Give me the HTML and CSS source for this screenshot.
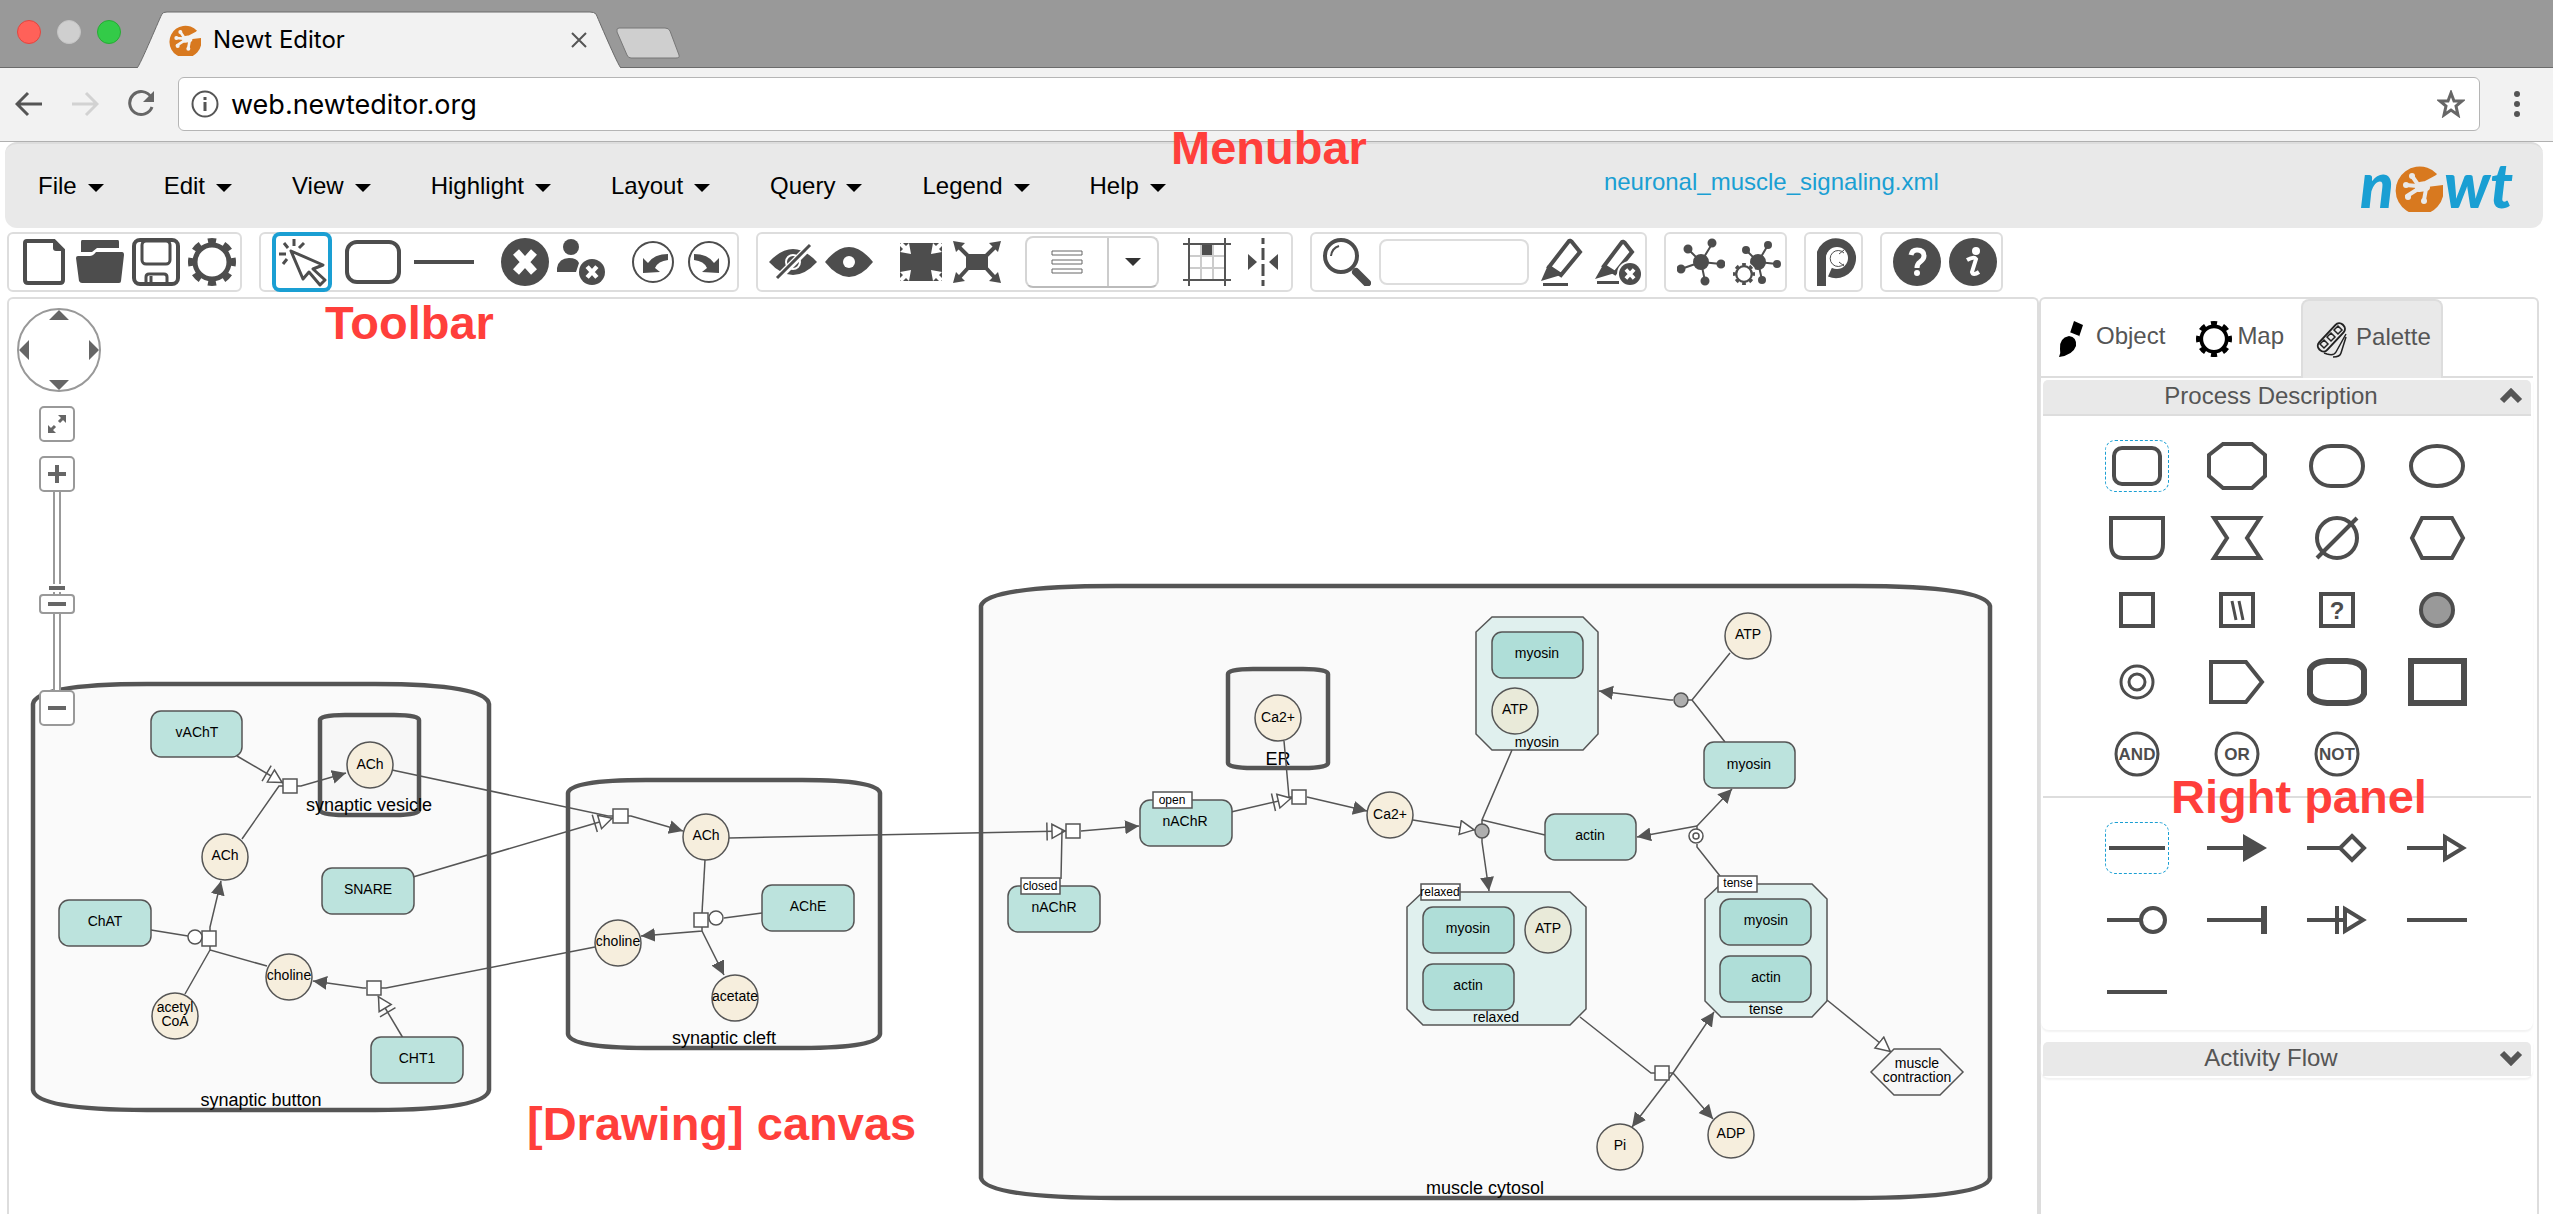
FILE: index.html
```html
<!DOCTYPE html>
<html lang="en">
<head>
<meta charset="utf-8">
<title>Newt Editor</title>
<link rel="stylesheet" href="styles.css">
</head>
<body>
<svg class="defs" aria-hidden="true">
  <symbol id="gear" viewBox="0 0 48 48"><g fill="none" stroke="currentColor"><circle cx="24" cy="24" r="17" stroke-width="5"/><circle cx="24" cy="24" r="21" stroke-width="6" pathLength="16" stroke-dasharray="1 1" stroke-dashoffset=".5"/></g></symbol>
  <symbol id="paw" viewBox="0 0 48 48"><path fill="#d8791f" d="M42 10A24 24 0 1 0 48 21L32 23z"/><g fill="none" stroke="var(--paw)" stroke-linecap="round"><path stroke-width="4" d="M24 22L17 12M22 22L11 21M23 25L12 32M31 25L29 36"/><path stroke-width="6" d="M25 21L31 20L46 12"/><path stroke-width="8" d="M24 24L31 23"/></g><g fill="var(--paw)"><circle cx="17" cy="12" r="3"/><circle cx="11" cy="21" r="3"/><circle cx="13" cy="33" r="3"/><circle cx="29" cy="37" r="3"/></g></symbol>
  <symbol id="cross" viewBox="0 0 48 48"><circle cx="24" cy="24" r="24" fill="currentColor"/><path d="M15 14L33 34M33 14L15 34" stroke="#fff" stroke-width="8"/></symbol>
</svg>

<header class="browser">
  <div class="titlebar">
    <i class="light red"></i><i class="light gray"></i><i class="light green"></i>
    <div class="tab">
      <svg class="tab-shape" viewBox="0 0 484 56"><path d="M0 56C3 54 24 3 25 2Q26 0 30 0H453Q457 0 459 2C460 4 481 54 484 56" fill="#f2f2f2" stroke="#6b6b6b"/></svg>
      <svg class="favicon" viewBox="0 0 48 48"><use href="#paw"/></svg>
      <span>Newt Editor</span>
      <button class="close" aria-label="Close tab"><svg viewBox="0 0 16 16"><path d="M1 1L15 15M15 1L1 15" stroke="#555" stroke-width="2"/></svg></button>
    </div>
    <svg class="newtab" viewBox="0 0 66 32"><path d="M4 1H50Q54 1 55 4L64 28Q65 31 61 31H16Q13 31 12 28L2 5Q1 1 4 1z" fill="#cfcfcf" stroke="#777"/></svg>
  </div>
  <div class="addressbar">
    <button aria-label="Back"><svg viewBox="0 0 28 28"><path d="M27 14H2M13 3L2 14L13 25" fill="none" stroke="#555" stroke-width="3"/></svg></button>
    <button aria-label="Forward"><svg viewBox="0 0 28 28"><path d="M1 14H26M15 3L26 14L15 25" fill="none" stroke="#d2d2d2" stroke-width="3"/></svg></button>
    <button aria-label="Reload"><svg viewBox="0 0 28 28"><path d="M24 7A11.500 11.500 0 1 0 25 17" fill="none" stroke="#666" stroke-width="3"/><path d="M27 1V12H16z" fill="#666"/></svg></button>
    <div class="urlbox">
      <svg class="info" viewBox="0 0 28 28"><circle cx="14" cy="14" r="12.500" fill="none" stroke="#555" stroke-width="2"/><path d="M14 12V21M14 7V10" stroke="#555" stroke-width="3"/></svg>
      <input type="text" value="web.newteditor.org" aria-label="Address">
      <svg class="star" viewBox="0 0 28 28"><path d="M14 3L17 11H25L19 16L21 25L14 20L7 25L9 16L3 11H11z" fill="none" stroke="#666" stroke-width="3"/></svg>
    </div>
    <button class="dots" aria-label="Browser menu"><svg viewBox="0 0 8 28"><g fill="#555"><circle cx="4" cy="4" r="3"/><circle cx="4" cy="14" r="3"/><circle cx="4" cy="24" r="3"/></g></svg></button>
  </div>
</header>

<nav class="menubar">
  <button>File</button><button>Edit</button><button>View</button><button>Highlight</button><button>Layout</button><button>Query</button><button>Legend</button><button>Help</button>
  <a class="filename" href="#">neuronal_muscle_signaling.xml</a>
  <div class="logo" role="img" aria-label="newt">
    <span>n</span><svg viewBox="0 0 48 48"><use href="#paw"/></svg><span>wt</span>
  </div>
  <strong class="note note-menubar">Menubar</strong>
</nav>

<div class="toolbar">
  <div class="group">
    <button aria-label="New"><svg viewBox="0 0 48 48"><path d="M7 3H34L43 12V42Q43 45 40 45H8Q5 45 5 42V5Q5 3 7 3z" fill="none" stroke="currentColor" stroke-width="4"/><path d="M33 2V10Q33 13 36 13H44z" fill="currentColor"/></svg></button>
    <button aria-label="Open"><svg viewBox="0 0 48 48"><path fill="currentColor" d="M6 2H42Q43 2 43 4V10H21L16 14H5V4Q5 2 6 2zM2 18H14Q17 18 20 14H46Q48 14 48 17L45 43Q45 45 43 45H6Q4 45 3 43L0 20Q0 18 2 18z"/></svg></button>
    <button aria-label="Save"><svg viewBox="0 0 48 48"><g fill="none" stroke="currentColor" stroke-width="4"><rect x="2" y="2" width="44" height="44" rx="6"/><rect x="10" y="3" width="28" height="23" rx="4" stroke-width="3"/><path d="M14 46V39Q14 36 17 36H32Q35 36 35 39V46" stroke-width="3"/><path d="M19 38V44" stroke-width="3"/></g></svg></button>
    <button aria-label="Settings"><svg viewBox="0 0 48 48"><use href="#gear"/></svg></button>
  </div>
  <div class="group">
    <button class="wide active" aria-label="Select"><svg viewBox="0 0 60 60"><g fill="none" stroke="currentColor" stroke-width="3"><path d="M19 19L51 33L41 37L53 48L48 53L37 40L31 47z" stroke-linejoin="round"/><path d="M22 7V14M32 11L27 16M12 11L16 16M7 22H14M15 27L11 32"/></g></svg></button>
    <button class="wide" aria-label="Add node"><svg viewBox="0 0 60 60"><rect x="4" y="10" width="52" height="40" rx="10" fill="none" stroke="currentColor" stroke-width="4"/></svg></button>
    <button class="wide" aria-label="Add edge"><svg viewBox="0 0 60 60"><path d="M0 30H60" stroke="currentColor" stroke-width="4"/></svg></button>
    <button class="sep" aria-label="Delete"><svg viewBox="0 0 48 48"><use href="#cross"/></svg></button>
    <button aria-label="Delete complex"><svg viewBox="0 0 48 48"><circle cx="14" cy="9" r="8" fill="currentColor"/><path d="M0 34V30Q2 20 12 20Q20 20 22 25L19 34z" fill="currentColor"/><use href="#cross" x="22" y="21" width="26" height="26"/></svg></button>
    <button class="sep" aria-label="Undo"><svg viewBox="0 0 48 48"><circle cx="24" cy="24" r="20" fill="none" stroke="currentColor" stroke-width="2"/><path d="M14 20V35L31 34L26 30Q29 23 39 22V16Q25 16 19 25z" fill="currentColor"/></svg></button>
    <button aria-label="Redo"><svg viewBox="0 0 48 48"><circle cx="24" cy="24" r="20" fill="none" stroke="currentColor" stroke-width="2"/><path d="M34 20V35L17 34L22 30Q19 23 9 22V16Q23 16 29 25z" fill="currentColor"/></svg></button>
  </div>
  <div class="group">
    <button aria-label="Hide selected"><svg viewBox="0 0 48 48"><path d="M0 24Q12 11 24 11T48 24Q36 37 24 37T0 24z" fill="currentColor"/><circle cx="24" cy="24" r="7" fill="none" stroke="#fff" stroke-width="2"/><path d="M42 7L8 41" stroke="#fff" stroke-width="7"/><path d="M41 7L8 40" stroke="currentColor" stroke-width="3"/></svg></button>
    <button aria-label="Show all"><svg viewBox="0 0 48 48"><path d="M0 24Q12 9 24 9T48 24Q36 39 24 39T0 24z" fill="currentColor"/><circle cx="24" cy="24" r="6" fill="#fff"/></svg></button>
    <button class="sep" aria-label="Collapse"><svg viewBox="0 0 48 48"><rect x="3" y="5" width="42" height="38" fill="currentColor"/><g fill="#fff"><path d="M2 7L5 4L9 8L12 5L14 16L3 14L6 11z"/><path d="M46 7L43 4L39 8L36 5L34 16L45 14L42 11zM2 41L5 44L9 40L12 43L14 32L3 34L6 37zM46 41L43 44L39 40L36 43L34 32L45 34L42 37z"/></g></svg></button>
    <button aria-label="Expand"><svg viewBox="0 0 48 48"><rect x="13" y="16" width="22" height="16" fill="currentColor"/><path d="M5 8L15 18M43 8L33 18M5 41L15 30M43 41L33 30" stroke="currentColor" stroke-width="4"/><path d="M0 3L12 5L3 14zM48 3L36 5L45 14zM0 45L12 43L3 34zM48 45L36 43L45 34z" fill="currentColor"/></svg></button>
    <div class="split sep">
      <button aria-label="Align"><svg viewBox="0 0 32 24"><path d="M1 1H31V5H1zM1 10H31V14H1zM1 19H31V23H1z" fill="none" stroke="#666"/></svg></button>
      <button class="drop" aria-label="Alignment options"></button>
    </div>
    <button class="sep" aria-label="Grid"><svg viewBox="0 0 48 48"><path d="M18 6V42M30 6V42M6 18H42M6 30H42" stroke="#ccc" stroke-width="2"/><path d="M6 0V48M42 0V48M0 6H48M0 42H48" stroke="#555" stroke-width="2"/><rect x="19" y="7" width="10" height="10" fill="currentColor"/></svg></button>
    <button aria-label="Guidelines"><svg viewBox="0 0 48 48"><path d="M24 0V48" stroke="currentColor" stroke-width="3" stroke-dasharray="6 4 12 4 12 4"/><path d="M9 16L18 24L9 32zM39 16L30 24L39 32z" fill="currentColor"/></svg></button>
  </div>
  <div class="group">
    <button aria-label="Search"><svg viewBox="0 0 48 48"><g fill="none" stroke="currentColor"><circle cx="18" cy="18" r="16" stroke-width="4"/><path d="M8 18Q9 10 16 8" stroke-width="2"/><path d="M33 34L44 45" stroke-width="8" stroke-linecap="round"/></g></svg></button>
    <input class="search" type="text" aria-label="Search by label">
    <button aria-label="Highlight"><svg viewBox="0 0 48 48"><path d="M32 3Q33 2 35 4L43 14L24 37L12 29z" fill="none" stroke="currentColor" stroke-width="4"/><path d="M11 27L24 37L4 43zM6 45H31V48H6z" fill="currentColor"/></svg></button>
    <button aria-label="Remove highlights"><svg viewBox="0 0 48 48"><path d="M29 4Q30 3 32 5L39 14L22 35L11 28z" fill="none" stroke="currentColor" stroke-width="4"/><path d="M10 27L22 35L2 41zM4 43H26V46H4z" fill="currentColor"/><circle cx="37" cy="36" r="13" fill="#fff"/><use href="#cross" x="26" y="25" width="22" height="22"/></svg></button>
  </div>
  <div class="group">
    <button aria-label="Layout"><svg viewBox="0 0 48 48"><g stroke="currentColor" stroke-width="2" fill="currentColor"><path d="M24 24L35 6M24 24L11 11M24 24L4 31M24 24L44 26M24 24L28 43"/><circle cx="24" cy="24" r="7"/><circle cx="35" cy="5" r="3.500"/><circle cx="11" cy="11" r="3.500"/><circle cx="4" cy="31" r="3.500"/><circle cx="44" cy="26" r="3.500"/><circle cx="28" cy="43" r="3.500"/></g></svg></button>
    <button aria-label="Layout settings"><svg viewBox="0 0 48 48"><g stroke="currentColor" stroke-width="2" fill="currentColor"><path d="M25 24L35 7M25 24L13 12M25 24L44 26M25 24L29 42"/><circle cx="25" cy="24" r="7"/><circle cx="35" cy="7" r="3"/><circle cx="13" cy="12" r="3"/><circle cx="44" cy="26" r="3"/><circle cx="29" cy="42" r="3"/></g><circle cx="11" cy="36" r="12" fill="#fff"/><use href="#gear" x="0" y="25" width="22" height="22"/></svg></button>
  </div>
  <div class="group">
    <button class="narrow" aria-label="Query Pathway Commons"><svg viewBox="0 0 40 48"><path d="M4 48V20A15 15 0 1 1 13 34" fill="none" stroke="currentColor" stroke-width="10"/><circle cx="20" cy="20" r="11" fill="#fff"/><path d="M27 15A8 8 0 1 0 27 26M22 16L27 12M22 24L27 28" fill="none" stroke="currentColor"/></svg></button>
  </div>
  <div class="group">
    <button aria-label="Quick help"><svg viewBox="0 0 48 48"><circle cx="24" cy="24" r="24" fill="currentColor"/><path d="M18 17Q19 12 24 12Q31 12 31 18Q31 21 27 24Q24 26 24 30" fill="none" stroke="#fff" stroke-width="5"/><circle cx="24" cy="35" r="3" fill="#fff"/></svg></button>
    <button aria-label="About"><svg viewBox="0 0 48 48"><circle cx="24" cy="24" r="24" fill="currentColor"/><circle cx="27" cy="13" r="4" fill="#fff"/><path d="M18 22Q25 18 27 21L23 34Q24 38 30 34" fill="none" stroke="#fff" stroke-width="4"/></svg></button>
  </div>
</div>

<main class="workspace">
  <section class="canvas" aria-label="Drawing canvas">
    <svg class="graph" viewBox="9 299 2028 915">
      <defs>
        <marker id="arrow" markerUnits="userSpaceOnUse" markerWidth="16" markerHeight="16" refX="14" refY="7" orient="auto"><path d="M0 0L14 7L0 14z" fill="#555"/></marker>
        <marker id="open" markerUnits="userSpaceOnUse" markerWidth="18" markerHeight="18" refX="16" refY="8" orient="auto"><path d="M1 1L15 8L1 15z" fill="#fff" stroke="#555" stroke-width="1.500"/></marker>
        <marker id="trigger" markerUnits="userSpaceOnUse" markerWidth="24" markerHeight="20" refX="21" refY="10" orient="auto"><path d="M7 3L20 10L7 17zM2 1V19" fill="#fff" stroke="#555" stroke-width="1.500"/></marker>
        <path id="cut" d="M1492 617H1583L1598 632V734L1583 750H1492L1476 734V632z"/>
      </defs>
      <g class="compartment">
        <path d="M33 704Q36 684 147 684H375Q486 684 489 704V1090Q486 1110 375 1110H147Q36 1110 33 1090z"/>
        <path d="M568 793Q570 780 646 780H802Q878 780 880 793V1034Q878 1048 802 1048H646Q570 1048 568 1034z"/>
        <path d="M981 606Q986 586 1116 586H1855Q1985 586 1990 606V1178Q1985 1198 1855 1198H1116Q986 1198 981 1178z"/>
        <path class="inner" d="M320 720Q320 715 345 715H394Q419 715 419 720V810Q419 815 394 815H345Q320 815 320 810z"/>
        <path class="inner" d="M1228 674Q1228 669 1253 669H1303Q1328 669 1328 674V763Q1328 768 1303 768H1253Q1228 768 1228 763z"/>
      </g>
      <g class="title">
        <text x="261" y="1106">synaptic button</text><text x="369" y="811">synaptic vesicle</text><text x="724" y="1044">synaptic cleft</text><text x="1278" y="765">ER</text><text x="1485" y="1194">muscle cytosol</text>
      </g>
      <g class="complex">
        <use href="#cut"/><use href="#cut" x="229" y="267"/>
        <path d="M1423 892H1570L1586 907V1009L1570 1025H1423L1407 1009V907z"/>
      </g>
      <g class="edge">
        <path d="M237 756L283 783" marker-end="url(#trigger)"/>
        <path d="M242 839L279 786H283"/>
        <path d="M297 786H301L346 773" marker-end="url(#arrow)"/>
        <path d="M392 770L608 816H613"/>
        <path d="M413 877L613 818" marker-end="url(#trigger)"/>
        <path d="M628 816H631L683 831" marker-end="url(#arrow)"/>
        <path d="M729 838L1066 831" marker-end="url(#trigger)"/>
        <path d="M705 860L702 913"/>
        <path d="M762 913L724 918"/>
        <path d="M702 927V931L641 936" marker-end="url(#arrow)"/>
        <path d="M702 931L724 975" marker-end="url(#arrow)"/>
        <path d="M595 947L386 988H381"/>
        <path d="M366 988H363L313 981" marker-end="url(#arrow)"/>
        <path d="M403 1038L378 996" marker-end="url(#trigger)"/>
        <path d="M151 930L188 936"/>
        <path d="M210 931V927L221 881" marker-end="url(#arrow)"/>
        <path d="M210 946V950L267 966M210 950L185 994"/>
        <path d="M1061 879L1062 831H1066"/>
        <path d="M1081 831L1139 826" marker-end="url(#arrow)"/>
        <path d="M1231 812L1292 798" marker-end="url(#trigger)"/>
        <path d="M1284 741L1289 797H1292"/>
        <path d="M1307 797L1367 811" marker-end="url(#arrow)"/>
        <path d="M1413 820L1475 830" marker-end="url(#open)"/>
        <path d="M1512 750L1482 820V824M1545 835L1482 820"/>
        <path d="M1482 838V842L1489 891" marker-end="url(#arrow)"/>
        <path d="M1730 653L1692 700L1725 742M1692 700H1688"/>
        <path d="M1673 700H1670L1599 691" marker-end="url(#arrow)"/>
        <path d="M1697 829V826L1732 789" marker-end="url(#arrow)"/>
        <path d="M1697 826L1637 837" marker-end="url(#arrow)"/>
        <path d="M1697 844V847L1720 876"/>
        <path d="M1580 1017L1651 1073H1655M1669 1073H1673"/>
        <path d="M1673 1073L1714 1012" marker-end="url(#arrow)"/>
        <path d="M1673 1073L1632 1127" marker-end="url(#arrow)"/>
        <path d="M1673 1073L1713 1119" marker-end="url(#arrow)"/>
        <path d="M1827 1000L1891 1052" marker-end="url(#open)"/>
      </g>
      <g class="process">
        <rect x="283" y="779" width="14" height="14"/><rect x="202" y="931" width="14" height="15"/><rect x="367" y="981" width="14" height="14"/><rect x="613" y="809" width="15" height="14"/><rect x="694" y="913" width="14" height="14"/><rect x="1066" y="824" width="14" height="14"/><rect x="1292" y="790" width="14" height="14"/><rect x="1655" y="1066" width="14" height="14"/>
        <circle cx="195" cy="937" r="7"/><circle cx="716" cy="918" r="7"/>
        <circle cx="1696" cy="836" r="7"/><circle cx="1696" cy="836" r="3"/>
        <circle class="assoc" cx="1482" cy="831" r="7"/><circle class="assoc" cx="1681" cy="700" r="7"/>
      </g>
      <g class="macro">
        <rect x="151" y="711" width="91" height="46" rx="10"/><rect x="322" y="868" width="92" height="46" rx="10"/><rect x="59" y="900" width="92" height="46" rx="10"/><rect x="371" y="1037" width="92" height="46" rx="10"/><rect x="762" y="885" width="92" height="46" rx="10"/><rect x="1140" y="800" width="92" height="46" rx="10"/><rect x="1008" y="886" width="92" height="46" rx="10"/><rect x="1704" y="742" width="91" height="46" rx="10"/><rect x="1545" y="814" width="91" height="46" rx="10"/>
        <g class="nested"><rect x="1492" y="632" width="91" height="46" rx="10"/><rect x="1720" y="899" width="91" height="46" rx="10"/><rect x="1720" y="956" width="91" height="46" rx="10"/><rect x="1423" y="907" width="91" height="46" rx="10"/><rect x="1423" y="964" width="91" height="46" rx="10"/></g>
      </g>
      <g class="chemical">
        <circle cx="370" cy="765" r="23"/><circle cx="225" cy="857" r="23"/><circle cx="289" cy="977" r="23"/><circle cx="175" cy="1016" r="23"/><circle cx="706" cy="837" r="23"/><circle cx="618" cy="943" r="23"/><circle cx="735" cy="998" r="23"/><circle cx="1278" cy="718" r="23"/><circle cx="1390" cy="815" r="23"/><circle cx="1748" cy="636" r="23"/><circle cx="1620" cy="1147" r="23"/><circle cx="1731" cy="1135" r="23"/>
        <g class="nested"><circle cx="1515" cy="711" r="23"/><circle cx="1548" cy="930" r="23"/></g>
      </g>
      <path class="phenotype" d="M1894 1049H1940L1963 1072L1940 1095H1894L1871 1072z"/>
      <g class="label">
        <text x="197" y="737">vAChT</text><text x="368" y="894">SNARE</text><text x="105" y="926">ChAT</text><text x="417" y="1063">CHT1</text><text x="808" y="911">AChE</text><text x="1185" y="826">nAChR</text><text x="1054" y="912">nAChR</text><text x="1749" y="769">myosin</text><text x="1590" y="840">actin</text>
        <text x="1537" y="658">myosin</text><text x="1766" y="925">myosin</text><text x="1766" y="982">actin</text><text x="1468" y="933">myosin</text><text x="1468" y="990">actin</text>
        <text x="370" y="769">ACh</text><text x="225" y="860">ACh</text><text x="289" y="980">choline</text><text x="175" y="1012">acetyl</text><text x="175" y="1026">CoA</text><text x="706" y="840">ACh</text><text x="618" y="946">choline</text><text x="735" y="1001">acetate</text><text x="1278" y="722">Ca2+</text><text x="1390" y="819">Ca2+</text><text x="1748" y="639">ATP</text><text x="1620" y="1150">Pi</text><text x="1731" y="1138">ADP</text><text x="1515" y="714">ATP</text><text x="1548" y="933">ATP</text>
        <text x="1537" y="747">myosin</text><text x="1766" y="1014">tense</text><text x="1496" y="1022">relaxed</text><text x="1917" y="1068">muscle</text><text x="1917" y="1082">contraction</text>
      </g>
      <g class="state">
        <rect x="1153" y="792" width="39" height="16"/><rect x="1021" y="878" width="39" height="16"/><rect x="1718" y="876" width="39" height="16"/><rect x="1421" y="884" width="39" height="16"/>
        <text x="1172" y="804">open</text><text x="1040" y="890">closed</text><text x="1738" y="887">tense</text><text x="1440" y="896">relaxed</text>
      </g>
    </svg>

    <div class="navigator">
      <svg class="pan" viewBox="0 0 84 84"><circle cx="42" cy="42" r="41" fill="#fff" stroke="#999" stroke-width="2"/><path d="M32 12L42 2L52 12zM32 72L42 82L52 72zM12 32L2 42L12 52zM72 32L82 42L72 52z" fill="#666"/></svg>
      <button class="fit" aria-label="Fit"><svg viewBox="0 0 20 20"><path d="M3 17L8 12M12 8L17 3" stroke="#666" stroke-width="3"/><path d="M11 1H19V9zM1 11V19H9z" fill="#666"/></svg></button>
      <button aria-label="Zoom in"><svg viewBox="0 0 20 20"><path d="M1 10H19M10 1V19" stroke="#666" stroke-width="4"/></svg></button>
      <div class="track"><i class="tick"></i><i class="handle"></i></div>
      <button aria-label="Zoom out"><svg viewBox="0 0 20 20"><path d="M1 10H19" stroke="#666" stroke-width="4"/></svg></button>
    </div>
    <strong class="note note-toolbar">Toolbar</strong>
    <strong class="note note-canvas">[Drawing] canvas</strong>
  </section>

  <aside class="panel">
    <div class="tabs" role="tablist">
      <button role="tab"><svg viewBox="0 0 36 36"><path d="M19 0L28 4L24 16L15 12zM16 11L23 14M14 15Q22 16 21 25Q18 34 4 36Q6 32 5 28Q4 17 14 15z"/><path d="M14 12L24 16" stroke="#fff" stroke-width="2"/></svg>Object</button>
      <button role="tab"><svg viewBox="0 0 48 48"><use href="#gear"/></svg>Map</button>
      <button role="tab" class="current"><svg viewBox="0 0 36 36"><g fill="none" stroke="#222" stroke-width="2"><rect x="-5" y="-17" width="11" height="34" rx="5" transform="translate(16 15) rotate(43)"/><path d="M9 18L13 22L9 26L5 22zM16 11L20 15L16 19L12 15zM23 4L27 8L23 12L19 8z" stroke-width="1.500"/><path d="M31 12L21 30Q19 34 12 32L9 31M31 15L26 31Q25 35 18 35" stroke-width="1.500"/></g></svg>Palette</button>
    </div>
    <section class="section">
      <button class="head"><span>Process Description</span><svg viewBox="0 0 24 16"><path d="M3 13L12 4L21 13" fill="none" stroke="#555" stroke-width="6"/></svg></button>
      <div class="shapes">
        <button class="selected" aria-label="Macromolecule"><svg viewBox="0 0 60 48"><rect x="7" y="6" width="46" height="36" rx="8"/></svg></button>
        <button aria-label="Complex"><svg viewBox="0 0 60 48"><path d="M16 2H45L58 13V34L45 46H16L2 34V13z"/></svg></button>
        <button aria-label="Simple chemical"><svg viewBox="0 0 60 48"><rect x="4" y="4" width="52" height="40" rx="20"/></svg></button>
        <button aria-label="Unspecified entity"><svg viewBox="0 0 60 48"><ellipse cx="30" cy="24" rx="26" ry="20"/></svg></button>
        <button aria-label="Nucleic acid feature"><svg viewBox="0 0 60 48"><path d="M4 4H56V30Q56 44 44 44H16Q4 44 4 30z"/></svg></button>
        <button aria-label="Perturbing agent"><svg viewBox="0 0 60 48"><path d="M7 4H53L40 24L53 44H7L20 24z"/></svg></button>
        <button aria-label="Empty set"><svg viewBox="0 0 60 48"><circle cx="30" cy="24" r="20"/><path d="M10 44L50 4"/></svg></button>
        <button aria-label="Phenotype"><svg viewBox="0 0 60 48"><path d="M15 4H45L56 24L45 44H15L5 24z"/></svg></button>
        <button aria-label="Process"><svg viewBox="0 0 60 48"><rect x="14" y="8" width="32" height="32"/></svg></button>
        <button aria-label="Omitted process"><svg viewBox="0 0 60 48"><rect x="14" y="8" width="32" height="32"/><path d="M25 15L29 34M32 15L36 34" stroke-width="3"/></svg></button>
        <button aria-label="Uncertain process"><svg viewBox="0 0 60 48"><rect x="14" y="8" width="32" height="32"/><text x="30" y="33" font-size="24">?</text></svg></button>
        <button aria-label="Association"><svg viewBox="0 0 60 48"><circle cx="30" cy="24" r="16" class="solid"/></svg></button>
        <button aria-label="Dissociation"><svg viewBox="0 0 60 48"><circle cx="30" cy="24" r="16" stroke-width="3"/><circle cx="30" cy="24" r="8" stroke-width="3"/></svg></button>
        <button aria-label="Tag"><svg viewBox="0 0 60 48"><path d="M4 4H39L55 24L39 44H4z"/></svg></button>
        <button aria-label="Compartment"><svg class="bold" viewBox="0 0 60 48"><path d="M3 12Q6 4 20 3H40Q54 4 57 12V36Q54 44 40 45H20Q6 44 3 36z"/></svg></button>
        <button aria-label="Submap"><svg class="bold" viewBox="0 0 60 48"><rect x="4" y="3" width="53" height="42"/></svg></button>
        <button aria-label="And"><svg class="thin" viewBox="0 0 60 48"><circle cx="30" cy="24" r="21"/><text x="30" y="30">AND</text></svg></button>
        <button aria-label="Or"><svg class="thin" viewBox="0 0 60 48"><circle cx="30" cy="24" r="21"/><text x="30" y="30">OR</text></svg></button>
        <button aria-label="Not"><svg class="thin" viewBox="0 0 60 48"><circle cx="30" cy="24" r="21"/><text x="30" y="30">NOT</text></svg></button>
      </div>
      <hr>
      <div class="shapes">
        <button class="selected" aria-label="Consumption"><svg viewBox="0 0 60 48"><path d="M2 24H58"/></svg></button>
        <button aria-label="Production"><svg viewBox="0 0 60 48"><path d="M0 24H40"/><path d="M36 10L60 24L36 38z" class="dark"/></svg></button>
        <button aria-label="Modulation"><svg viewBox="0 0 60 48"><path d="M0 24H32M45 12L57 24L45 36L33 24z"/></svg></button>
        <button aria-label="Stimulation"><svg viewBox="0 0 60 48"><path d="M0 24H36M38 13L56 24L38 35z"/></svg></button>
        <button aria-label="Catalysis"><svg viewBox="0 0 60 48"><path d="M0 24H33"/><circle cx="46" cy="24" r="12"/></svg></button>
        <button aria-label="Inhibition"><svg viewBox="0 0 60 48"><path d="M0 24H56"/><path d="M57 10V38" stroke-width="6"/></svg></button>
        <button aria-label="Necessary stimulation"><svg viewBox="0 0 60 48"><path d="M0 24H38M30 10V38M38 13L56 24L38 35z"/></svg></button>
        <button aria-label="Logic arc"><svg viewBox="0 0 60 48"><path d="M0 24H60"/></svg></button>
        <button aria-label="Equivalence arc"><svg viewBox="0 0 60 48"><path d="M0 24H60"/></svg></button>
      </div>
    </section>
    <section class="section folded">
      <button class="head"><span>Activity Flow</span><svg viewBox="0 0 24 16"><path d="M3 3L12 12L21 3" fill="none" stroke="#555" stroke-width="6"/></svg></button>
    </section>
    <strong class="note note-panel">Right panel</strong>
  </aside>
</main>
</body>
</html>
```
FILE: styles.css
```css
* { box-sizing: border-box; }

body {
  margin: 0;
  height: 100vh;
  display: flex;
  flex-direction: column;
  overflow: hidden;
  background: #fff;
  color: #000;
  font: 24px/28px "Liberation Sans", Arial, sans-serif;
  --paw: #e9e9e9;
}

button, input { font: inherit; color: inherit; }
button { border: 0; padding: 0; background: none; }
svg { display: block; }
.defs { position: absolute; width: 0; height: 0; }

/* browser window */
.titlebar {
  display: flex;
  height: 68px;
  padding-left: 17px;
  background: #999;
  border-bottom: 1px solid #6b6b6b;
}
.light {
  width: 24px;
  height: 24px;
  margin: 20px 16px 0 0;
  border-radius: 50%;
  border: 1px solid #c4c4c4;
  background: #cfcfcf;
}
.light.red { background: #ff6159; border-color: #e14640; }
.light.green { background: #33cb48; border-color: #27ab35; }
.tab {
  position: relative;
  display: flex;
  align-items: center;
  width: 484px;
  height: 56px;
  margin-top: 12px;
  padding: 0 34px 0 32px;
  font: 24px/28px Inter, "Liberation Sans", sans-serif;
  --paw: #f2f2f2;
}
.tab-shape { position: absolute; inset: 0; width: 100%; height: 56px; overflow: visible; }
.favicon { position: relative; width: 32px; height: 32px; margin-right: 12px; }
.tab span { position: relative; flex: 1; }
.close { position: relative; }
.close svg { width: 16px; height: 16px; }
.newtab { width: 66px; height: 32px; margin: 27px 0 0 -6px; }

.addressbar {
  display: flex;
  align-items: center;
  height: 74px;
  padding: 0 32px 2px 15px;
  background: #f2f2f2;
  border-bottom: 1px solid #b0b0b0;
}
.addressbar > button { margin-right: 28px; }
.addressbar > button svg { width: 28px; height: 28px; }
.urlbox {
  flex: 1;
  display: flex;
  align-items: center;
  height: 54px;
  padding: 0 14px 0 12px;
  margin-left: -5px;
  border: 1px solid #b5b5b5;
  border-radius: 6px;
  background: #fff;
}
.urlbox input {
  flex: 1;
  border: 0;
  padding: 2px 0 0;
  margin-left: 12px;
  background: none;
  font: 27px/32px Inter, "Liberation Sans", sans-serif;
}
.urlbox svg { width: 28px; height: 28px; }
.addressbar > .dots { margin: 0 0 0 33px; }
.addressbar > .dots svg { width: 8px; }

/* application menu */
.menubar {
  position: relative;
  display: flex;
  align-items: center;
  height: 86px;
  margin: 0 10px 0 5px;
  padding: 0 30px 0 33px;
  border-radius: 12px;
  border-top: 2px solid #ddd;
  background: #e9e9e9;
}
.menubar > button { display: flex; align-items: center; margin-right: 60px; }
.menubar > button::after {
  content: "";
  margin: 3px 0 0 11px;
  border: 8px solid transparent;
  border-top-color: #000;
  border-bottom: 0;
}
.filename {
  margin: 0 auto 8px 378px;
  color: #1a9fd3;
  text-decoration: none;
}
.logo {
  display: flex;
  align-items: center;
  gap: 1px;
  color: #1a9fd3;
  font: italic 900 62px/80px Lato, "Open Sans", sans-serif;
}
.logo span { padding-bottom: 4px; }
.logo svg { width: 48px; height: 48px; margin-top: 4px; }

/* toolbar */
.toolbar {
  display: flex;
  gap: 17px;
  height: 60px;
  margin: 4px 7px 5px;
  color: #4d4d4d;
}
.group {
  display: flex;
  align-items: center;
  gap: 8px;
  height: 60px;
  padding: 0 4px 0 11px;
  border: 2px solid #ddd;
  border-radius: 6px;
}
.group svg { width: 48px; height: 48px; }
.group .wide { width: 60px; margin-right: 3px; }
.group .wide svg { width: 60px; height: 60px; }
.group .narrow svg { width: 40px; }
.group .active { height: 60px; border-radius: 8px; box-shadow: inset 0 0 0 4px #1a9fd3; }
.sep { margin-left: 16px; }
.split {
  display: flex;
  width: 134px;
  height: 52px;
  border: 2px solid #d5d5d5;
  border-bottom-color: #bbb;
  border-radius: 8px;
}
.split button { flex: 1; display: grid; place-items: center; }
.split svg { width: 32px; height: 24px; }
.split .drop { flex: 0 0 50px; border-left: 2px solid #ccc; }
.drop::after {
  content: "";
  border: 8px solid transparent;
  border-top-color: #333;
  border-bottom: 0;
}
.search {
  width: 150px;
  height: 46px;
  padding: 0 10px;
  border: 2px solid #ddd;
  border-radius: 8px;
  background: #fff;
}

/* workspace */
.workspace { flex: 1; display: flex; min-height: 0; margin: 0 14px 0 7px; }
.canvas, .panel {
  position: relative;
  border: 2px solid #ddd;
  border-bottom: 0;
  border-radius: 6px 6px 0 0;
}
.canvas { flex: 1; overflow: hidden; }
.graph { position: absolute; top: 0; left: 0; width: 2028px; height: 915px; }
.graph text { text-anchor: middle; }
.compartment { fill: #fafafa; stroke: #555; stroke-width: 4.5; }
.inner { fill: #f7f7f7; }
.title { font-size: 18px; }
.complex { fill: #e0f0ee; stroke: #555; stroke-width: 1.5; }
.edge { fill: none; stroke: #555; stroke-width: 1.5; }
.process { fill: #fff; stroke: #555; stroke-width: 1.5; }
.assoc { fill: #aeaeae; }
.macro { fill: #bce3dd; stroke: #555; stroke-width: 1.5; }
.macro .nested { fill: #afded8; }
.chemical { fill: #f6eedd; stroke: #555; stroke-width: 1.5; }
.chemical .nested { fill: #e9ead9; }
.phenotype { fill: #f7f7f7; stroke: #555; stroke-width: 1.5; }
.label { font-size: 14px; }
.state { font-size: 12px; }
.state rect { fill: #fff; stroke: #555; stroke-width: 1.5; }

.navigator {
  position: absolute;
  top: 9px;
  left: 8px;
  display: flex;
  flex-direction: column;
  align-items: center;
  width: 84px;
}
.pan { width: 84px; height: 84px; }
.navigator button {
  width: 36px;
  height: 36px;
  margin: 0 4px 0 0;
  display: grid;
  place-items: center;
  border: 2px solid #999;
  border-radius: 5px;
  background: #fff;
}
.navigator button svg { width: 20px; height: 20px; }
.navigator .fit { margin: 14px 4px 14px 0; }
.track {
  position: relative;
  width: 8px;
  height: 198px;
  margin-right: 4px;
  border: solid #999;
  border-width: 0 2px;
  background: #fff;
}
.tick, .handle { position: absolute; }
.tick {
  left: -6px;
  top: 92px;
  width: 16px;
  height: 8px;
  background: #666;
  border: solid #fff;
  border-width: 2px 0;
}
.handle {
  left: -16px;
  top: 102px;
  width: 36px;
  height: 20px;
  border: 2px solid #999;
  border-radius: 4px;
  background: linear-gradient(#666, #666) center / 18px 4px no-repeat #fff;
}

/* right panel */
.panel { width: 500px; color: #555; }
.tabs {
  display: flex;
  gap: 5px;
  height: 79px;
  margin-right: 4px;
  border-bottom: 2px solid #ddd;
}
.tabs button {
  display: flex;
  align-items: center;
  gap: 5px;
  height: 79px;
  padding: 0 10px 6px 12px;
  border: 2px solid transparent;
}
.tabs svg { width: 36px; height: 36px; color: #000; margin-top: 6px; }
.tabs .current {
  background: #e9e9e9;
  border-color: #ddd;
  border-bottom: 0;
  border-radius: 8px 8px 0 0;
}
.section {
  margin: 2px 4px 0 0;
  padding: 0 2px 12px 2px;
  border-radius: 0 0 8px 8px;
  box-shadow: 0 2px 2px #f2f2f2;
}
.folded { margin-top: 12px; padding-bottom: 2px; }
.head {
  display: flex;
  align-items: center;
  width: 100%;
  height: 36px;
  padding: 0 8px 2px 0;
  border-radius: 5px 5px 0 0;
  border-bottom: 2px solid #ddd;
  background: #e9e9e9;
}
.folded .head { border-bottom: 0; height: 34px; padding-bottom: 3px; }
.head span { flex: 1; }
.head svg { width: 24px; height: 16px; }
.shapes {
  display: grid;
  grid-template-columns: repeat(4, 64px);
  gap: 20px 36px;
  padding: 24px 0 16px 62px;
}
.shapes + hr + .shapes { padding-bottom: 0; }
.shapes button {
  display: grid;
  place-items: center;
  width: 64px;
  height: 52px;
  border: 1px solid transparent;
  border-radius: 10px;
}
.shapes .selected { border: 1px dashed #1a9fd3; }
.shapes svg { width: 60px; height: 48px; fill: none; stroke: #4d4d4d; stroke-width: 4; }
.shapes .bold { stroke-width: 6; }
.shapes .thin { stroke-width: 3; font-size: 17px; }
.shapes .solid { fill: #999; }
.shapes .dark { fill: #4d4d4d; stroke: none; }
.shapes text {
  fill: #4d4d4d;
  stroke: none;
  font-weight: 700;
  text-anchor: middle;
}
hr { margin: 0; border: 0; border-top: 2px solid #ddd; }

/* annotations laid over the interface */
.note {
  position: absolute;
  color: #ff3f3b;
  font-size: 47px;
  line-height: 48px;
  white-space: nowrap;
}
.note-menubar { left: 1166px; top: -20px; }
.note-toolbar { left: 316px; top: 0; }
.note-canvas { left: 518px; top: 801px; }
.note-panel { left: 130px; top: 474px; }
```
